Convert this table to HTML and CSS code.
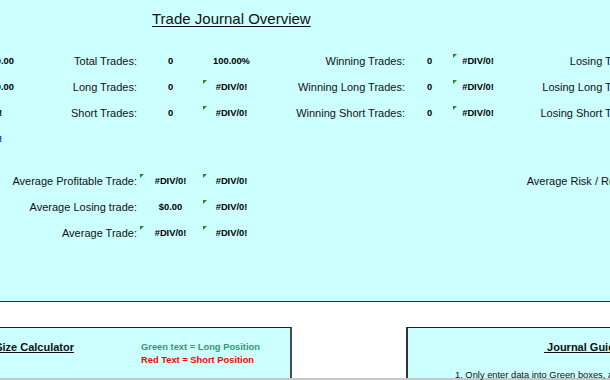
FILE: index.html
```html
<!DOCTYPE html>
<html>
<head>
<meta charset="utf-8">
<link rel="stylesheet" href="styles.css">
</head>
<body>
<div class="page">
  <section class="sheet">
    <h1 class="title">Trade Journal Overview</h1>
    <div class="stats">
      <div class="row">
        <div class="cell c0 val-b">$0.00</div>
        <div class="cell lbl">Total Trades:</div>
        <div class="cell num">0</div>
        <div class="cell num">100.00%</div>
        <div class="cell lbl">Winning Trades:</div>
        <div class="cell num">0</div>
        <div class="cell num flag">#DIV/0!</div>
        <div class="cell lbl">Losing Trades:</div>
      </div>
      <div class="row">
        <div class="cell c0 val-b">$0.00</div>
        <div class="cell lbl">Long Trades:</div>
        <div class="cell num">0</div>
        <div class="cell num flag">#DIV/0!</div>
        <div class="cell lbl">Winning Long Trades:</div>
        <div class="cell num">0</div>
        <div class="cell num flag">#DIV/0!</div>
        <div class="cell lbl">Losing Long Trades:</div>
      </div>
      <div class="row">
        <div class="cell c0 val-b shifted">#DIV/0!</div>
        <div class="cell lbl">Short Trades:</div>
        <div class="cell num">0</div>
        <div class="cell num flag">#DIV/0!</div>
        <div class="cell lbl">Winning Short Trades:</div>
        <div class="cell num">0</div>
        <div class="cell num flag">#DIV/0!</div>
        <div class="cell lbl">Losing Short Trades:</div>
      </div>
      <div class="row">
        <div class="cell c0 val-b shifted blue">#DIV/0!</div>
      </div>
      <div class="row sep">
        <div class="cell c0"></div>
        <div class="cell lbl">Average Profitable Trade:</div>
        <div class="cell num flag">#DIV/0!</div>
        <div class="cell num flag">#DIV/0!</div>
        <div class="cell lbl"></div>
        <div class="cell num"></div>
        <div class="cell num"></div>
        <div class="cell lbl">Average Risk / Reward:</div>
      </div>
      <div class="row">
        <div class="cell c0"></div>
        <div class="cell lbl">Average Losing trade:</div>
        <div class="cell num">$0.00</div>
        <div class="cell num flag">#DIV/0!</div>
      </div>
      <div class="row">
        <div class="cell c0"></div>
        <div class="cell lbl">Average Trade:</div>
        <div class="cell num flag">#DIV/0!</div>
        <div class="cell num flag">#DIV/0!</div>
      </div>
    </div>
  </section>

  <section class="lower">
    <div class="box box-calc">
      <div class="calc-title">Position Size Calculator</div>
      <div class="legend">
        <div class="legend-green">Green text = Long Position</div>
        <div class="legend-red">Red Text = Short Position</div>
      </div>
    </div>
    <div class="box box-guide">
      <div class="guide-title">&nbsp;Journal Guide</div>
      <div class="guide-line">1. Only enter data into Green boxes, and leave all other cells untouched.</div>
    </div>
  </section>
  <div class="hscroll"></div>
</div>
</body>
</html>
```

FILE: styles.css
```css
html, body {
  margin: 0;
  padding: 0;
  overflow: hidden;
  background: #ffffff;
}

.page {
  width: 610px;
  height: 380px;
  overflow: hidden;
  font-family: "Liberation Sans", Arial, sans-serif;
  color: #111;
}

.sheet {
  background: #ccffff;
  height: 291px;
  padding-top: 10px;
  border-bottom: 1px solid #333;
}

.title {
  margin: 0 0 0 152px;
  font-size: 15px;
  line-height: 18px;
  font-weight: normal;
  text-decoration: underline;
  text-underline-offset: 2px;
  text-decoration-thickness: 1px;
  white-space: nowrap;
}

.stats {
  margin-top: 25px;
  margin-left: -40px;
  display: flex;
  flex-direction: column;
  gap: 10px;
}

.row {
  display: grid;
  grid-template-columns: 54px 125px 63px 59px 146px 45px 52px 140px;
  height: 16px;
}

.row.sep {
  margin-top: 16px;
}

.cell {
  position: relative;
  display: flex;
  align-items: center;
  white-space: nowrap;
  height: 16px;
}

.lbl {
  justify-content: flex-end;
  padding-right: 2px;
  font-size: 11px;
}

.num {
  justify-content: center;
  font-size: 9.33px;
  font-weight: bold;
  color: #000;
}

.c0 {
  justify-content: flex-end;
}

.val-b {
  font-size: 9.33px;
  font-weight: bold;
  color: #000;
}

.shifted {
  padding-right: 12px;
}

.blue {
  color: #1f2fd0;
}

.flag::before {
  content: "";
  position: absolute;
  left: 1px;
  top: 1px;
  width: 0;
  height: 0;
  border-top: 4px solid #1e8c1e;
  border-right: 4px solid transparent;
}

.lower {
  display: flex;
  height: 51px;
  padding-top: 25px;
}

.box {
  background: #ccffff;
  border-top: 1px solid #222;
}

.box-calc {
  margin-left: -70px;
  width: 360px;
  flex: none;
  border-right: 2px solid #4a4a4a;
  display: flex;
  align-items: flex-start;
  padding-top: 13px;
}

.calc-title {
  width: 144px;
  flex: none;
  text-align: right;
  font-size: 11px;
  line-height: 13px;
  font-weight: bold;
  text-decoration: underline;
  white-space: nowrap;
}

.legend {
  margin-left: 67px;
  font-size: 9.33px;
  line-height: 13px;
  font-weight: bold;
  white-space: nowrap;
}

.legend-green {
  color: #33996a;
}

.legend-red {
  color: #ff0000;
}

.box-guide {
  margin-left: 114px;
  width: 400px;
  flex: none;
  border-left: 2px solid #333;
  padding-top: 13px;
  white-space: nowrap;
}

.guide-title {
  padding-left: 136px;
  font-size: 11px;
  line-height: 13px;
  font-weight: bold;
  text-decoration: underline;
}

.guide-line {
  padding-left: 47px;
  margin-top: 15px;
  font-size: 9.33px;
  line-height: 12px;
}

.hscroll {
  height: 2px;
  background: #c4c8c8;
}
```
